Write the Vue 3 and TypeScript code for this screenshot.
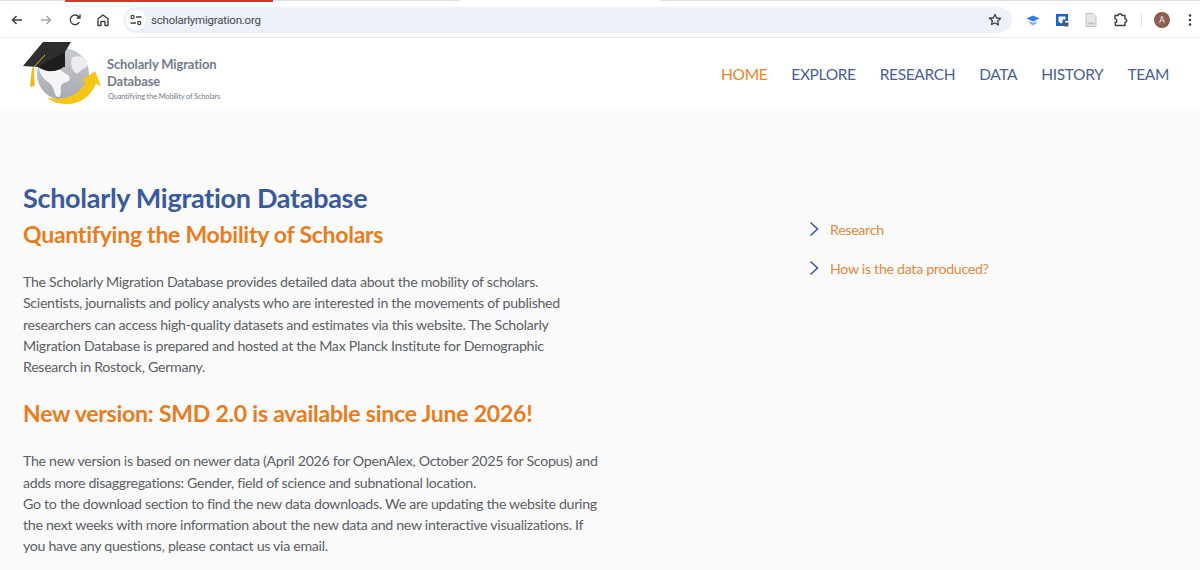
<script setup lang="ts">
const navItems = ['HOME', 'EXPLORE', 'RESEARCH', 'DATA', 'HISTORY', 'TEAM']
const sideLinks = ['Research', 'How is the data produced?']
</script>

<template>
  <div class="page">
    <div class="tabstrip">
      <span class="seg seg-a"></span>
      <span class="seg seg-red"></span>
      <span class="seg seg-b"></span>
      <span class="seg seg-gap"></span>
      <span class="seg seg-c"></span>
    </div>
    <div class="toolbar">
      <svg class="tb back" width="16" height="16" viewBox="0 0 16 16"><path d="M13 8H3.500M7.500 4 3.500 8l4 4" fill="none" stroke="#3c4043" stroke-width="1.500" /></svg>
      <svg class="tb fwd" width="16" height="16" viewBox="0 0 16 16"><path d="M3 8h9.500M8.500 4l4 4-4 4" fill="none" stroke="#a3a6aa" stroke-width="1.500" /></svg>
      <svg class="tb reload" width="16" height="16" viewBox="0 0 16 16"><path d="M12.300 10.200A4.800 4.800 0 1 1 11.800 4.800L13 6M13 2.600V6H9.600" fill="none" stroke="#3c4043" stroke-width="1.400" /></svg>
      <svg class="tb home" width="16" height="16" viewBox="0 0 16 16"><path d="M3 13.500V6.800L8 3l5 3.800v6.700h-3V9.500H6v4Z" fill="none" stroke="#3c4043" stroke-width="1.400" stroke-linejoin="round" /></svg>
      <div class="omnibox">
        <span class="site-chip">
          <svg width="14" height="14" viewBox="0 0 14 14"><circle cx="3.600" cy="4" r="1.600" fill="none" stroke="#3c4043" stroke-width="1.200" /><path d="M7 4h5.500M1.500 10H7" stroke="#3c4043" stroke-width="1.300" /><circle cx="10.200" cy="10" r="1.600" fill="none" stroke="#3c4043" stroke-width="1.200" /></svg>
        </span>
        <span class="url">scholarlymigration.org</span>
        <svg class="star" width="16" height="16" viewBox="0 0 16 16"><path d="m8 2.500 1.700 3.500 3.800.5-2.800 2.700.7 3.800L8 11l-3.400 1.500.7-3.800-2.800-2.700L6.300 6Z" fill="none" stroke="#3c4043" stroke-width="1.300" stroke-linejoin="round" /></svg>
      </div>
      <div class="ext">
        <svg width="16" height="16" viewBox="0 0 16 16"><path d="M1.500 6.500 8 3.500l6.500 3L8 9.500Z" fill="#2f7de1" /><path d="M4.500 9v2.200L8 13.500l3.500-2.300V9L8 10.800Z" fill="#7fb2ee" /></svg>
        <svg width="16" height="16" viewBox="0 0 16 16"><path d="M2 2h12v7h-3v5H2Z" fill="#1a62c6" /><path d="M4.500 4.500h7v3h-3v3l-1.500 1-2.500-2Z" fill="#fff" /><rect x="10" y="10.500" width="4.500" height="4" rx=".8" fill="#55585c" /></svg>
        <svg width="16" height="16" viewBox="0 0 16 16"><path d="M3 1.500h7l3 3v10H3Z" fill="#e6e7e9" stroke="#bfc2c6" /><path d="M4.500 10.500h7v2h-7Z" fill="#bfc2c6" /></svg>
        <svg width="16" height="16" viewBox="0 0 16 16"><path d="M3 3.500h3.200a1.800 1.800 0 0 1 3.600 0H13v3.200a1.800 1.800 0 0 1 0 3.600V13.500H3.500l-.5-3a1.800 1.800 0 0 0 0-3.600Z" fill="none" stroke="#3c4043" stroke-width="1.400" stroke-linejoin="round" /></svg>
        <span class="sep"></span>
        <span class="avatar">A</span>
        <svg class="dots" width="4" height="14" viewBox="0 0 4 14"><circle cx="2" cy="2.500" r="1.300" fill="#3c4043" /><circle cx="2" cy="7" r="1.300" fill="#3c4043" /><circle cx="2" cy="11.500" r="1.300" fill="#3c4043" /></svg>
      </div>
    </div>

    <header class="site-header">
      <div class="brand">
        <svg class="logo" width="100" height="72" viewBox="0 0 300 216">
          <defs>
            <linearGradient id="globeShade" x1="0" y1="0" x2="0" y2="1">
              <stop offset="0" stop-color="#c8cbcf" />
              <stop offset="1" stop-color="#a6aab1" />
            </linearGradient>
          </defs>
          <!-- globe -->
          <circle cx="144" cy="108" r="78" fill="url(#globeShade)" />
          <path d="M72 88c25-8 55-4 72 14 6 6 24 8 20 22-3 10-18 8-24 16-7 10 2 24-6 36-8 4-13-4-15-12-4-14-8-24-20-32-14-10-26-24-27-44Z" fill="#f4f5f6" />
          <path d="M172 58c14-6 30-4 42 8 6 12 4 22-10 28-9 4-11 12-20 12-14-4-20-38-12-48Z" fill="#ebeced" />
          <!-- swoosh -->
          <path d="M96 178C135 190 190 178 212 132L200 126 240 100 258 144 243 137C225 180 190 200 150 198 125 197 108 190 96 178Z" fill="#f5c518" />
          <!-- cap -->
          <path d="M69 87h81V42L100 40ZM69 87c14 10 30 14 46 12 18-2 34-10 35-24Z" fill="#1d1d1d" />
          <path d="M84 12h84l-18 30-81 45-45-3Z" fill="#2e2e2e" />
          <path d="M90 51 54 90" fill="none" stroke="#e6bd1a" stroke-width="3" />
          <path d="M51 90h6l2 52c0 5-14 6-14 1Z" fill="#e6bd1a" />
        </svg>
        <div class="brand-text">
          <div class="brand-name">Scholarly Migration<br />Database</div>
          <div class="brand-sub">Quantifying the Mobility of Scholars</div>
        </div>
      </div>
      <nav class="nav">
        <a v-for="(item, i) in navItems" :key="item" :class="{ active: i === 0 }">{{ item }}</a>
      </nav>
    </header>

    <main class="content">
      <section class="main-col">
        <h1>Scholarly Migration Database</h1>
        <h2>Quantifying the Mobility of Scholars</h2>
        <p class="intro">
          The Scholarly Migration Database provides detailed data about the mobility of scholars.<br />
          Scientists, journalists and policy analysts who are interested in the movements of published<br />
          researchers can access high-quality datasets and estimates via this website. The Scholarly<br />
          Migration Database is prepared and hosted at the Max Planck Institute for Demographic<br />
          Research in Rostock, Germany.
        </p>
        <h3>New version: SMD 2.0 is available since June 2026!</h3>
        <p>
          The new version is based on newer data (April 2026 for OpenAlex, October 2025 for Scopus) and<br />
          adds more disaggregations: Gender, field of science and subnational location.<br />
          Go to the download section to find the new data downloads. We are updating the website during<br />
          the next weeks with more information about the new data and new interactive visualizations. If<br />
          you have any questions, please contact us via email.
        </p>
      </section>
      <aside class="side">
        <div v-for="link in sideLinks" :key="link" class="side-link">
          <svg width="10" height="16" viewBox="0 0 10 16"><path d="M1.500 1.500 8.500 8l-7 6.500" fill="none" stroke="#3d5a9e" stroke-width="1.600" /></svg>
          <span>{{ link }}</span>
        </div>
      </aside>
    </main>
  </div>
</template>

<style>
html,
body {
  margin: 0;
  overflow: hidden;
}
</style>

<style scoped>
.page {
  width: 1200px;
  height: 570px;
  overflow: hidden;
  background: #fafafa;
  font-family: "Lato", sans-serif;
}

.tabstrip {
  height: 2px;
  display: flex;
  background: #fff;
}

.seg {
  height: 1px;
  background: #dcdfe6;
}

.seg-a {
  width: 65px;
}

.seg-red {
  width: 208px;
  height: 2px;
  background: #d5362c;
}

.seg-b {
  width: 187px;
}

.seg-gap {
  width: 200px;
  background: #fff;
}

.seg-c {
  flex: 1;
}

.toolbar {
  height: 35px;
  background: #fff;
  border-bottom: 1px solid #eceef1;
  display: flex;
  align-items: center;
  padding-left: 9px;
}

.tb {
  flex: none;
}

.fwd {
  margin-left: 13px;
}

.reload {
  margin-left: 13px;
}

.home {
  margin-left: 12px;
}

.omnibox {
  width: 889px;
  height: 26px;
  margin-left: 12px;
  border-radius: 13px;
  background: #edf2fa;
  display: flex;
  align-items: center;
}

.site-chip {
  width: 20px;
  height: 20px;
  margin-left: 3px;
  border-radius: 50%;
  background: #fff;
  display: flex;
  align-items: center;
  justify-content: center;
}

.url {
  margin-left: 5px;
  font-family: "Roboto", sans-serif;
  font-size: 11.500px;
  letter-spacing: -0.22px;
  color: #44474b;
}

.star {
  margin-left: auto;
  margin-right: 9px;
}

.ext {
  display: flex;
  align-items: center;
  gap: 13px;
  margin-left: 13px;
}

.sep {
  width: 1px;
  height: 14px;
  background: #dfe3e8;
  margin: 0 -1px 0 0;
}

.avatar {
  width: 16px;
  height: 16px;
  border-radius: 50%;
  background: #8a5f52;
  color: #f3e8e4;
  font-family: "Roboto", sans-serif;
  font-size: 9px;
  display: flex;
  align-items: center;
  justify-content: center;
}

.dots {
  margin-left: 5px;
}

.site-header {
  height: 71px;
  background: #fff;
  display: flex;
  justify-content: space-between;
  align-items: flex-start;
}

.brand {
  display: flex;
  margin-left: 15px;
}

.logo {
  display: block;
  flex: none;
}

.brand-text {
  margin: 18px 0 0 -8px;
}

.brand-name {
  font-size: 13px;
  line-height: 17px;
  font-weight: 700;
  letter-spacing: -0.15px;
  color: #737c8b;
}

.brand-sub {
  font-size: 7.500px;
  line-height: 10px;
  margin: 2px 0 0 1px;
  letter-spacing: -0.18px;
  color: #737c8b;
}

.nav {
  display: flex;
  gap: 24px;
  margin: 25px 31px 0 0;
}

.nav a {
  font-size: 15.500px;
  line-height: 22px;
  letter-spacing: -0.35px;
  color: #4a5f96;
}

.nav a.active {
  color: #e8832a;
}

.content {
  display: flex;
  padding: 71px 0 0 23px;
}

.main-col {
  width: 786px;
  flex: none;
}

h1,
h2,
h3,
p {
  margin: 0;
}

h1 {
  font-size: 27px;
  line-height: 36px;
  font-weight: 700;
  letter-spacing: -0.3px;
  color: #3a5a9f;
}

h2 {
  font-size: 23px;
  line-height: 36px;
  font-weight: 700;
  letter-spacing: -0.26px;
  color: #ea7c20;
}

h3 {
  font-size: 23px;
  line-height: 32px;
  font-weight: 700;
  letter-spacing: -0.22px;
  color: #ea7c20;
  margin: 20px 0 21px;
}

p {
  font-size: 14.200px;
  line-height: 21.250px;
  letter-spacing: -0.3px;
  color: #5b5f66;
}

.intro {
  margin-top: 19px;
}

.side {
  padding-top: 38px;
  display: flex;
  flex-direction: column;
  gap: 17px;
}

.side-link {
  display: flex;
  align-items: center;
  gap: 11px;
  height: 22px;
  font-size: 14.200px;
  letter-spacing: -0.3px;
  color: #e2893c;
}
</style>
